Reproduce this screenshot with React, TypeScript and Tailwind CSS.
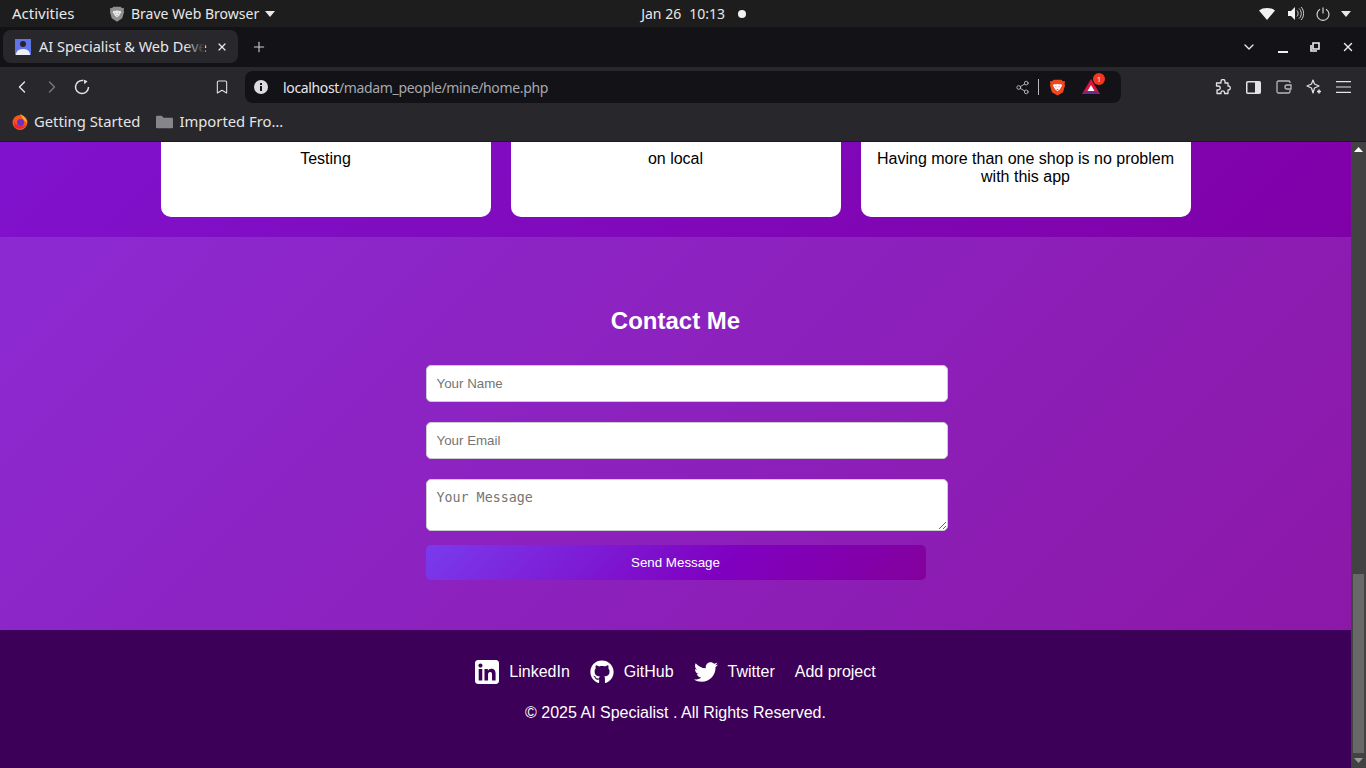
import { Bookmark, ChevronDown, ChevronLeft, ChevronRight, Plus, Share2, X } from 'lucide-react'
import { FaGithub, FaTwitter } from 'react-icons/fa'

const BraveShield = ({ size, fill, face }: { size: number; fill: string; face: string }) => (
  <svg width={size} height={size} viewBox="0 0 20 22">
    <path d="M5 1h10l2 2 2-.5.8 1.500-.8 2 .8 2-2.600 9L10 21.500 2.800 17 .2 8l.8-2-.8-2L1 2.500 3 3z" fill={fill} />
    <path d="M5.500 6.500 8 7l2-1 2 1 2.500-.5 1.500 2-2 3-1 2-1.500 1L10 16l-1.500-1.500L7 13.500l-1-2-2-3z" fill={face} />
    <path d="M7 9l2 1-1 1zM13 9l-2 1 1 1zM8.500 13h3L10 14.500z" fill={fill} />
  </svg>
)

const LinkedinIcon = () => (
  <svg width="24" height="24" viewBox="0 32 448 448" fill="currentColor">
    <path d="M392 32H56C25 32 0 57 0 88v336c0 31 25 56 56 56h336c31 0 56-25 56-56V88c0-31-25-56-56-56zM135.400 416H69V202.200h66.500V416zm-33.200-243c-21.300 0-38.500-17.300-38.500-38.500S80.900 96 102.200 96c21.200 0 38.500 17.300 38.500 38.500 0 21.300-17.200 38.500-38.500 38.500zm282.100 243h-66.400V312c0-24.800-.5-56.700-34.500-56.700-34.600 0-39.900 27-39.900 54.900V416h-66.400V202.200h63.700v29.200h.9c8.900-16.800 30.600-34.500 62.900-34.500 67.200 0 79.700 44.300 79.700 101.900V416z" />
  </svg>
)

const TopBar = () => (
  <div className="flex h-[27px] shrink-0 items-center bg-[#1d1d1d] text-[14px] text-[#e8e8e8]">
    <span className="ml-3 w-[97px] text-[15px]">Activities</span>
    <BraveShield size={16} fill="#8f8f8f" face="#e8e8e8" />
    <span className="ml-[6px]">Brave Web Browser</span>
    <svg className="ml-[6px]" width="10" height="6" viewBox="0 0 10 6"><path d="M0 0h10L5 6z" fill="#e8e8e8" /></svg>
    <div className="ml-[366px] flex w-[120px] items-center text-[14px]">
      <span>Jan 26</span>
      <span className="ml-2">10:13</span>
      <span className="ml-[13px] h-2 w-2 rounded-full bg-[#f2f2f2]" />
    </div>
    <div className="ml-auto flex items-center">
      <svg width="16" height="12" viewBox="0 0 16 12"><path d="M0 2.500C4-.8 12-.8 16 2.500L8 12z" fill="#f2f2f2" /></svg>
      <svg className="ml-[13px]" width="16" height="15" viewBox="0 0 16 15">
        <path d="M0 5h3l4-4v13l-4-4H0z" fill="#f2f2f2" />
        <path d="M9 4.500c1.500 1.500 1.500 4.500 0 6M11 2.500c3 2.500 3 7.500 0 10M13 1c3.500 3.500 3.500 9.500 0 13" fill="none" stroke="#cfcfcf" />
      </svg>
      <svg className="ml-[12px]" width="14" height="14" viewBox="0 0 14 14" fill="none" stroke="#e0e0e0" strokeWidth="1.100">
        <path d="M4 2.200a6 6 0 1 0 6 0M7 .5v6" />
      </svg>
      <svg className="ml-[11px] mr-[15px]" width="10" height="6" viewBox="0 0 10 6"><path d="M0 0h10L5 6z" fill="#e8e8e8" /></svg>
    </div>
  </div>
)

const Favicon = () => (
  <svg width="16" height="16" viewBox="0 0 16 16">
    <rect width="16" height="16" fill="#5f74e8" />
    <circle cx="8" cy="5" r="3" fill="#2a2230" />
    <path d="M1 16c0-4 3-6 7-6s7 2 7 6z" fill="#eef0f6" />
  </svg>
)

const TabStrip = () => (
  <div className="flex h-10 shrink-0 items-center bg-[#121217] text-[#e8e8ea]">
    <div className="ml-[3px] mt-[-1px] flex h-[33px] w-[235px] items-center rounded-lg bg-[#27272c] pl-3">
      <Favicon />
      <span className="relative ml-2 w-[166px] whitespace-nowrap text-[14.5px]">
        AI Specialist &amp; Web Deve
        <span className="absolute right-0 top-0 h-full w-5 bg-gradient-to-r from-transparent to-[#27272c]" />
      </span>
      <X className="ml-[11px]" size={12} strokeWidth={2.500} />
    </div>
    <Plus className="ml-[13px]" size={16} strokeWidth={1.600} color="#d0d0d2" />
    <div className="ml-auto flex items-center">
      <ChevronDown size={16} strokeWidth={2} />
      <span className="ml-[21px] mt-[9px] h-[2px] w-[10px] bg-[#f0f0f0]" />
      <svg className="ml-[22px]" width="10" height="10" viewBox="0 0 10 10" fill="none" stroke="#f0f0f0" strokeWidth="1.600">
        <path d="M3 1h6v6H3zM1 3v6h6" />
      </svg>
      <X className="ml-[21px] mr-[11px]" size={14} strokeWidth={2.500} />
    </div>
  </div>
)

const Toolbar = () => (
  <div className="flex h-[40px] shrink-0 items-center bg-[#27272c] text-[#e4e4e6]">
    <ChevronLeft className="ml-[12px]" size={20} strokeWidth={1.700} />
    <ChevronRight className="ml-[10px]" size={20} strokeWidth={1.700} color="#77777b" />
    <svg className="ml-[12px]" width="16" height="16" viewBox="0 0 16 16" fill="none" stroke="#e4e4e6" strokeWidth="1.500">
      <path d="M14.500 8A6.500 6.500 0 1 1 9 1.600" />
      <path d="M9.500 .5l4 1.800-3 3z" fill="#e4e4e6" stroke="none" />
    </svg>
    <Bookmark className="ml-[124px]" size={16} strokeWidth={1.600} />
    <div className="ml-[15px] flex h-8 w-[876px] items-center rounded-lg bg-[#121217] pl-[9px]">
      <svg width="14" height="14" viewBox="0 0 14 14">
        <circle cx="7" cy="7" r="7" fill="#dcdcde" />
        <rect x="6" y="6" width="2" height="5" fill="#121217" />
        <rect x="6" y="3" width="2" height="2" fill="#121217" />
      </svg>
      <span className="ml-[15px] text-[14px] tracking-[-0.35px] text-[#a8a8ac]"><span className="text-[#e6e6e8]">localhost</span>/madam_people/mine/home.php</span>
      <div className="ml-auto flex items-center">
        <Share2 size={15} strokeWidth={1.400} color="#c4c4c8" />
        <span className="ml-[8px] h-4 w-px bg-[#b8b8bc]" />
        <span className="ml-[10px] flex"><BraveShield size={17} fill="#f1471d" face="#ffffff" /></span>
        <div className="relative ml-[16px] mr-[21px] flex">
          <svg width="18" height="16" viewBox="0 0 18 16">
            <path d="M9 0l9 15H0z" fill="#d8153e" />
            <path d="M0 15l3-3h12l3 3z" fill="#662d91" />
            <path d="M9 6l3.500 6h-7z" fill="#ffffff" />
          </svg>
          <span className="absolute right-[-5px] top-[-6px] flex h-3 w-3 items-center justify-center rounded-full bg-[#f1371d] text-[7px] leading-none text-white">1</span>
        </div>
      </div>
    </div>
    <svg className="ml-[94px]" width="16" height="16" viewBox="0 0 16 16" fill="none" stroke="#e4e4e6" strokeWidth="1.300" strokeLinejoin="round">
      <path d="M6 2.500a2 2 0 0 1 4 0V4h3v3.200h1.200a2 2 0 0 1 0 3.600H13V14.500H9.500v-1.300a1.800 1.800 0 0 0-3.500 0v1.300H2V11h1.200a2 2 0 0 0 0-4H1.500V4H6z" />
    </svg>
    <svg className="ml-[15px]" width="15" height="13" viewBox="0 0 15 13">
      <rect x=".75" y=".75" width="13.500" height="11.500" rx="1" fill="none" stroke="#e4e4e6" strokeWidth="1.500" />
      <rect x="9" y="1" width="5" height="11" fill="#e4e4e6" />
    </svg>
    <svg className="ml-[15px]" width="16" height="14" viewBox="0 0 16 14" fill="none" stroke="#b8b8bc" strokeWidth="1.300">
      <path d="M14 3V2a1.500 1.500 0 0 0-1.500-1H2.500A1.500 1.500 0 0 0 1 2.500v9A1.500 1.500 0 0 0 2.500 13h10a1.500 1.500 0 0 0 1.500-1.500V10" />
      <path d="M15 5h-4a2 2 0 0 0 0 4h4z" />
    </svg>
    <svg className="ml-[14px]" width="16" height="16" viewBox="0 0 16 16" fill="none" stroke="#e4e4e6" strokeWidth="1.200">
      <path d="M7 1l1.500 4L13 7 8.500 9 7 14l-1.500-5L1 7l4.500-2z" strokeLinejoin="round" />
      <path d="M13 10.500v4M11 12.500h4" strokeWidth="1.500" />
    </svg>
    <svg className="ml-[14px]" width="15" height="12" viewBox="0 0 15 12" stroke="#e4e4e6" strokeWidth="1.200">
      <path d="M0 .6h15M0 6h15M0 11.400h15" />
    </svg>
  </div>
)

const Bookmarks = () => (
  <div className="flex h-[35px] shrink-0 items-center border-b border-b-[#1c1c20] bg-[#27272c] pb-[5px] text-[14.8px] text-[#e4e4e6]">
    <svg className="ml-3" width="16" height="17" viewBox="0 0 16 17">
      <circle cx="8" cy="9.500" r="7.500" fill="#f2571f" />
      <path d="M8 1c4 2 7 5 7 9l-3-3z" fill="#fbb41f" />
      <circle cx="8.500" cy="9.500" r="3.500" fill="#6e2fc4" />
      <path d="M2 8c2 5 7 7 12 4-2 4-8 5-11 2z" fill="#e8203f" />
    </svg>
    <span className="ml-[6px]">Getting Started</span>
    <svg className="ml-[16px]" width="17" height="14" viewBox="0 0 18 14">
      <path d="M0 1.500A1 1 0 0 1 1 .5h5l2 2h9a1 1 0 0 1 1 1v9a1 1 0 0 1-1 1H1a1 1 0 0 1-1-1z" fill="#85858a" />
    </svg>
    <span className="ml-[6px]">Imported Fro…</span>
  </div>
)

const Card = ({ lines }: { lines: string[] }) => (
  <div className="flex h-[75px] w-[330px] flex-col items-center rounded-b-[10px] bg-white px-[15px] text-center text-[16px] leading-[18px] text-black">
    <div className="mt-[8px]">{lines.map(l => <p key={l}>{l}</p>)}</div>
  </div>
)

const Scrollbar = () => (
  <div className="flex w-[15px] shrink-0 flex-col items-center justify-between bg-[#424242]">
    <svg className="mt-[5px]" width="9" height="5" viewBox="0 0 9 5"><path d="M0 5l4.500-5L9 5z" fill="#ffffff" /></svg>
    <div className="flex w-full flex-col items-center">
      <div className="h-[179px] w-[11px] bg-[#686868]" />
      <svg className="mb-[5px] mt-[5px]" width="9" height="5" viewBox="0 0 9 5"><path d="M0 0l4.500 5L9 0z" fill="#9a9a9a" /></svg>
    </div>
  </div>
)

const fieldClass = 'block w-[522px] rounded-[5px] border border-[#cccccc] bg-white px-[10px] text-[13.333px] text-black outline-none placeholder:text-[#757575]'

const Contact = () => (
  <section className="flex h-[393px] flex-col items-center bg-[linear-gradient(135deg,#8c2ad2,#8c18a8)] pt-[70px] font-['Liberation_Sans',sans-serif]">
    <h2 className="text-[24px] font-bold leading-[28px] text-white">Contact Me</h2>
    <form className="mt-[30px] w-[500px]">
      <input className={`${fieldClass} h-[37px]`} placeholder="Your Name" />
      <input className={`${fieldClass} mt-5 h-[37px]`} placeholder="Your Email" />
      <textarea className={`${fieldClass} mt-5 h-[52px] py-[10px] font-['DejaVu_Sans_Mono',monospace] leading-[16px]`} placeholder="Your Message" />
      <button type="button" className="mt-[14px] block h-[35px] w-[500px] rounded-[5px] bg-[linear-gradient(135deg,#7a3bed,#8000c0_60%,#84009c)] text-[13.333px] text-white">Send Message</button>
    </form>
  </section>
)

const FooterLink = ({ icon, label }: { icon?: React.ReactNode; label: string }) => (
  <a className="flex items-center gap-[10px]">
    {icon}
    <span>{label}</span>
  </a>
)

const Footer = () => (
  <footer className="flex h-[138px] flex-col items-center bg-[#3d0058] pt-[30px] font-['Liberation_Sans',sans-serif] text-[16px] text-white">
    <div className="flex h-6 items-center gap-5">
      <FooterLink icon={<LinkedinIcon />} label="LinkedIn" />
      <FooterLink icon={<FaGithub size={24} />} label="GitHub" />
      <FooterLink icon={<FaTwitter size={24} />} label="Twitter" />
      <FooterLink label="Add project" />
    </div>
    <p className="mt-[20px] leading-[18px]">© 2025 AI Specialist . All Rights Reserved.</p>
  </footer>
)

export default function App() {
  return (
    <div className="flex h-screen w-full flex-col overflow-hidden font-['Noto_Sans',sans-serif]">
      <TopBar />
      <TabStrip />
      <Toolbar />
      <Bookmarks />
      <div className="flex min-h-0 flex-1">
        <main className="min-w-0 flex-1">
          <section className="flex h-[95px] justify-center gap-5 bg-[linear-gradient(135deg,#8012ce,#8000a8)] font-['Liberation_Sans',sans-serif]">
            <Card lines={['Testing']} />
            <Card lines={['on local']} />
            <Card lines={['Having more than one shop is no problem', 'with this app']} />
          </section>
          <Contact />
          <Footer />
        </main>
        <Scrollbar />
      </div>
    </div>
  )
}
